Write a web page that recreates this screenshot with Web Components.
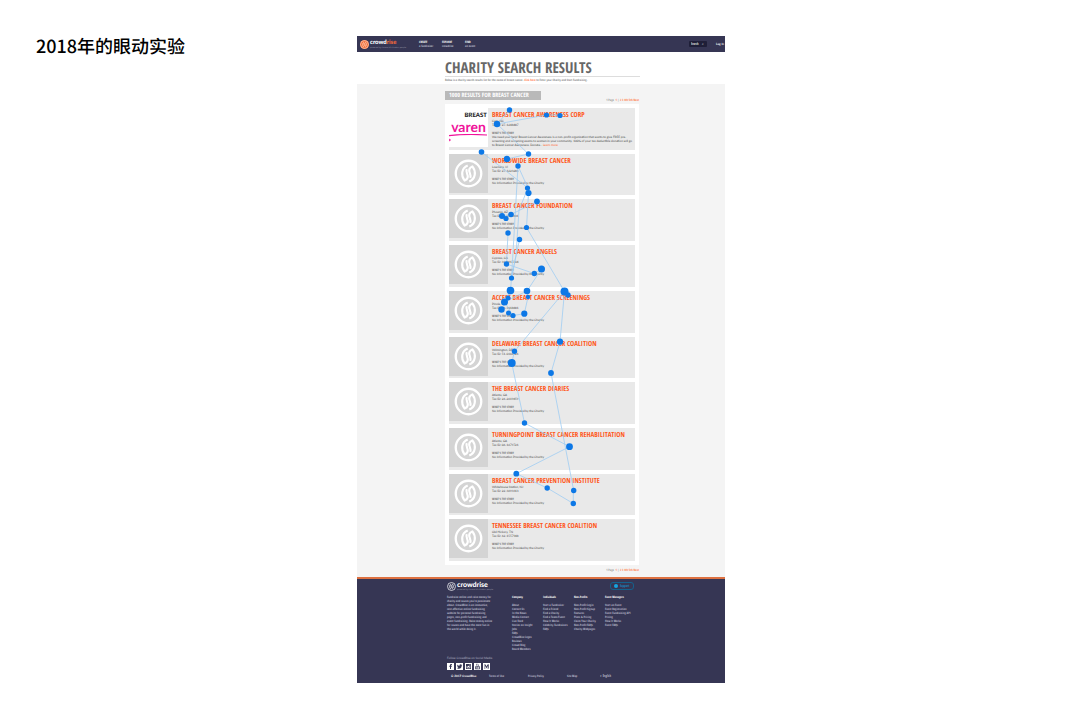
<!DOCTYPE html>
<html lang="zh-CN">
<head>
<meta charset="utf-8">
<title>2018年的眼动实验</title>
<style>
html, body { margin: 0; background: #fff; }
body { font-family: Lato, "Liberation Sans", sans-serif; text-rendering: geometricPrecision; --narrow: "Open Sans Condensed", "Open Sans", sans-serif; }
</style>
</head>
<body>
<study-slide>
  <span slot="title">2018年的眼动实验</span>
  <gaze-figure>
    <site-header></site-header>
    <page-intro></page-intro>
    <search-results></search-results>
    <site-footer></site-footer>
  </gaze-figure>
</study-slide>
<script>
const RESET = `
  :host, * { box-sizing: border-box; }
  * { margin: 0; padding: 0; }
  a { color: inherit; text-decoration: none; }
  ul { list-style: none; }
  button, input, select { font: inherit; color: inherit; border: 0; background: none; appearance: none; border-radius: 0; }
  svg { display: block; }
`;
const define = (name, html, setup) => customElements.define(name, class extends HTMLElement {
  constructor() {
    super();
    this.attachShadow({ mode: 'open' });
  }
  connectedCallback() {
    const tpl = document.createElement('template');
    tpl.innerHTML = `<style>${RESET}</style>` + (typeof html === 'function' ? html(this) : html);
    this.shadowRoot.replaceChildren(tpl.content.cloneNode(true));
    if (setup) setup(this);
  }
});

define('study-slide', `
  <style>
    :host { display: grid; grid-template-columns: 1fr minmax(0, 368px) 1fr; padding: 36px 0 36px 2px; }
    h2 { padding-left: 34px; font: 500 18px/20px "Noto Sans CJK SC", sans-serif; color: #000; white-space: nowrap; }
  </style>
  <h2><slot name="title"></slot></h2>
  <slot></slot>
`);

define('ring-mark', `
  <style>
    :host { display: block; }
    svg { width: 100%; height: 100%; fill: none; stroke: currentColor; }
  </style>
  <svg viewBox="0 0 30 30" aria-hidden="true">
    <circle cx="15" cy="15" r="13.2" stroke-width="2.4"/>
    <path stroke-width="2.2" stroke-linejoin="round" d="M14.2 6.8C7.4 9.4 7 17.4 11 22.4C14.4 20.8 14.8 18 13.6 15.4C12.8 13.4 12.6 12 13.2 10.4"/>
    <path stroke-width="2.2" stroke-linejoin="round" d="M15.8 23.2C22.6 20.6 23 12.6 19 7.6C15.6 9.2 15.2 12 16.4 14.6C17.2 16.6 17.4 18 16.8 19.6"/>
  </svg>
`);

define('brand-logo', `
  <style>
    :host { display: flex; align-items: center; gap: 1px; color: #fff; }
    .mark { width: 9px; height: 9px; flex: none; color: var(--mark, #fff); background: var(--disc, none); border-radius: 50%; }
    .name { font: 900 var(--size, 7px)/6px Lato, sans-serif; }
    em { font-style: normal; color: var(--accent, #fff); }
    small { display: block; font: 2px/3px "Open Sans", sans-serif; color: #9a9aac; white-space: nowrap; }
    a { display: block; }
  </style>
  <ring-mark class="mark"></ring-mark>
  <a href="#"><div class="name">crowd<em>rise</em></div><small><slot></slot></small></a>
`);

define('site-header', `
  <style>
    :host { display: flex; align-items: center; height: 16px; padding: 0 1px 0 3px; background: #363654; color: #fff; font: 3px/4px var(--narrow); }
    brand-logo { width: 59px; --size: 6px; --mark: #ffd9c4; --disc: #f26a35; --accent: #f4693a; }
    nav { display: grid; grid-template-columns: repeat(3, 23px); flex: 1; }
    nav a { color: #b9b9c8; }
    b { display: block; color: #fff; font-weight: 700; }
    form { display: flex; width: 18px; height: 6px; margin-right: 9px; padding: 0 2px; background: #1f1f38; border-radius: 1px; align-items: center; }
    input { width: 11px; height: 4px; }
    input::placeholder { color: #ddd; opacity: 1; }
    form button { font-size: 3px; line-height: 4px; }
    .login { font: 700 3px/4px Lato, sans-serif; white-space: nowrap; }
  </style>
  <brand-logo>powered by the world's kindest people</brand-logo>
  <nav>
    <a href="#"><b>CREATE</b>a fundraiser</a>
    <a href="#"><b>EXPLORE</b>crowdrise</a>
    <a href="#"><b>FIND</b>an event</a>
  </nav>
  <form role="search"><input type="text" placeholder="Search" aria-label="Search"><button type="button" aria-label="Go">⌕</button></form>
  <a class="login" href="#">Log In</a>
`);

define('page-intro', `
  <style>
    :host { display: block; height: 32px; padding: 8px 85px 0 88px; background: #fff; }
    h1 { font: 700 15px/16px var(--narrow); color: #676767; border-bottom: 1px solid #ddd; white-space: nowrap; height: 17px; }
    p { margin-top: 1px; font: 3px/4px var(--narrow); color: #8a8a8a; white-space: nowrap; }
    a { color: #ff7a4a; }
  </style>
  <h1>CHARITY SEARCH RESULTS</h1>
  <p>Below is a charity search results list for the name of breast cancer. <a href="#">Click here</a> to Enter your Charity and Start Fundraising.</p>
`);

define('result-pager', `
  <style>
    :host { display: block; font: 3px/4px var(--narrow); color: #999; text-align: right; }
    a { color: #ff7a4a; }
  </style>
  <nav aria-label="Pages">1 Page &nbsp;<a href="#">1</a> | <a href="#">2</a> <a href="#">3</a> <a href="#">4th</a> <a href="#">5th</a> <a href="#">Next</a></nav>
`);

define('charity-card', `
  <style>
    :host { display: flex; gap: 4px; padding: 1px; background: #e9e9e9; color: #444; font-size: 3px; line-height: 4px; min-height: 0; }
    .thumb { flex: none; width: 39px; height: 39px; background: #d4d4d4; display: grid; place-items: center; overflow: hidden; }
    ring-mark { width: 29px; height: 29px; color: #fff; }
    .body { padding-top: 4px; min-width: 0; }
    h3 { font: 700 7px/7px var(--narrow); color: #ff5719; white-space: nowrap; }
    h4 { font: 3px/4px var(--narrow); margin-top: 4px; color: #777; }
    p { white-space: nowrap; }
  </style>
  <div class="thumb"><slot name="picture"><ring-mark></ring-mark></slot></div>
  <div class="body">
    <h3><a href="#"><slot name="name"></slot></a></h3>
    <p><slot name="city"></slot></p>
    <p>Tax ID: <slot name="tax"></slot></p>
    <h4>WHAT'S THE STORY</h4>
    <p><slot>No Information Provided by the Charity</slot></p>
  </div>
`);

define('awareness-logo', `
  <style>
    :host { display: block; width: 39px; height: 39px; background: #fff; overflow: hidden; }
    .top { padding-top: 4px; font: 900 6px/7px Lato, sans-serif; color: #222; text-align: right; margin-right: 1px; }
    .big { font: 700 14px/15px Lato, sans-serif; color: #f0129a; display: flex; justify-content: center; }
    svg { width: 39px; height: 12px; fill: none; stroke: #f0129a; }
  </style>
  <div class="top">BREAST</div>
  <div class="big">varen</div>
  <svg viewBox="0 0 39 12" aria-hidden="true"><path stroke-width="1.2" d="M0 1.6Q18 -.2 38 1"/><path d="M0 5L1.5 6L0 7"/></svg>
`);

define('search-results', `
  <style>
    :host { display: block; padding: 7px 86px 5px 88px; background: #f4f4f4; }
    header { display: flex; justify-content: space-between; height: 13px; }
    h2 { height: 9px; padding: 0 4px; background: #b9b9b9; color: #fff; font: 700 6px/9px var(--narrow); white-space: nowrap; min-width: 96px; }
    header result-pager { margin-top: 7px; }
    .list { display: grid; grid-template-columns: minmax(0, 1fr); grid-auto-rows: 1fr; gap: 4px; min-height: 461px; padding: 4px; background: #fff; }
    result-pager { margin-top: 3px; }
  </style>
  <header><h2>1000 RESULTS FOR BREAST CANCER</h2><result-pager></result-pager></header>
  <div class="list"></div>
  <result-pager></result-pager>
`, el => {
  const story = `We need your help! Breast Cancer Awareness is a non-profit organization that wants to give FREE pre-<br>screening and screening exams to women in your community. 100% of your tax deductible donation will go<br>to Breast Cancer Awareness. Donate... <a href="#" style="color:#ff5719;text-decoration:none">Learn more</a>`;
  const rows = [
    ['BREAST CANCER AWARENESS CORP', 'Cary, NC', '27-1248487', story],
    ['WORLDWIDE BREAST CANCER', 'Lowndes, VI', '27-1223281'],
    ['BREAST CANCER FOUNDATION', 'Phoenix, AZ', '86-0915881'],
    ['BREAST CANCER ANGELS', 'Cypress, CA', '33-0917264'],
    ['ACCESS BREAST CANCER SCREENINGS', 'Pinole, CA', '26-3018881'],
    ['DELAWARE BREAST CANCER COALITION', 'Wilmington, DE', '51-0366521'],
    ['THE BREAST CANCER DIARIES', 'Atlanta, GA', '26-2619859'],
    ['TURNINGPOINT BREAST CANCER REHABILITATION', 'Atlanta, GA', '06-1679721'],
    ['BREAST CANCER PREVENTION INSTITUTE', 'Whitehouse Station, NJ', '22-3693313'],
    ['TENNESSEE BREAST CANCER COALITION', 'Old Hickory, TN', '62-1557948'],
  ];
  el.shadowRoot.querySelector('.list').innerHTML = rows.map(([n, c, t, s]) => `
    <charity-card>${s ? '<awareness-logo slot="picture"></awareness-logo>' : ''}<span slot="name">${n}</span><span slot="city">${c}</span><span slot="tax">${t}</span>${s || ''}</charity-card>`.trim()).join('');
});

define('footer-links', el => `
  <style>
    :host { display: block; flex: 0 0 31px; white-space: nowrap; }
    h5 { font: inherit; font-weight: 700; margin-bottom: 4px; color: #fff; }
  </style>
  <h5>${el.getAttribute('heading')}</h5>
  <ul>${el.textContent.split(';').map(t => `<li><a href="#">${t.trim()}</a></li>`).join('')}</ul>
`);

define('social-icon', el => `
  <style>
    :host { display: block; width: 7px; height: 7px; background: #fff; color: #363654; }
    a, svg { display: block; width: 7px; height: 7px; }
    svg { fill: currentColor; }
  </style>
  <a href="#" aria-label="${el.getAttribute('name')}"><svg viewBox="0 0 14 14">${({
    Facebook: '<path d="M6 12V7.5H4.5V5.5H6V4.3C6 2.8 7 2 8.3 2H9.8V4H8.8Q8 4 8 4.8V5.5H9.8L9.5 7.5H8V12Z"/>',
    Twitter: '<path d="M2 3Q4 5.4 7 5.4Q6.8 2.6 9.2 2.6Q10.2 2.6 10.8 3.3L12.2 2.9L11.4 4.4L12.4 4.2L11.4 5.4Q11.2 11.3 5.6 11.4Q3.4 11.4 2 10.4Q4 10.5 5 9.5Q3.4 9 3 7.9H4Q2.4 7.2 2.3 5.6L3.2 5.8Q1.6 4.6 2 3Z"/>',
    Instagram: '<path fill-rule="evenodd" d="M2 2H12V12H2ZM3.4 6V10.6H10.6V6H9.4A2.7 2.7 0 1 1 4.6 6ZM9 3.2V5H10.8V3.2ZM7 5.5A1.6 1.6 0 1 0 7 8.8A1.6 1.6 0 0 0 7 5.5Z"/>',
    YouTube: '<path d="M4 1.5H5L5.5 3L6 1.5H7L6 4V5.5H5V4ZM7.5 3H8.3V5H9V3H10V5.6H7.5Z"/><path fill-rule="evenodd" d="M2.5 6.3H11.5V12.5H2.5ZM4 7.3V11.5H5V7.3ZM6 8.3V11.5H7.2V8.3ZM8.3 7.3V11.5H10V8.3H9V7.3Z"/>',
    Medium: '<path d="M2 3H5L7 7L9 3H12V4L11.4 4.6V10L12 11H8.6L9.4 10V5.6L6.8 11L4.2 5.6V9.6L5.2 11H2L3.2 9.6V4.6Z"/>'
  })[el.getAttribute('name')]}</svg></a>
`);

define('site-footer', `
  <style>
    :host { display: block; padding: 3px 86px 5px 90px; border-top: 2px solid #dd7040; background: #363654; color: #b4b4c6; font: 3px/4px var(--narrow); }
    .top { display: flex; justify-content: space-between; height: 9px; margin-bottom: 4px; }
    .top button { display: flex; align-items: center; gap: 2px; height: 8px; width: 24px; margin-right: 5px; padding: 0 3px; border: 1px solid #14618c; border-radius: 3px; color: #1a86bd; }
    .dot { width: 4px; height: 4px; border-radius: 50%; background: #15a5e0; }
    .cols { display: flex; height: 61px; }
    .about { flex: 0 0 65px; min-width: 0; white-space: nowrap; }
    .social { display: flex; gap: 2px; margin: 3px 0 4px; }
    .legal { display: grid; grid-template-columns: 38px 39px 39px 33px auto; padding-left: 4px; white-space: nowrap; }
    .legal b { color: #fff; font-family: Lato, sans-serif; }
    .follow { font-family: Lato, sans-serif; }
    select { font-size: 3px; line-height: 4px; height: 4px; width: 14px; padding: 0; display: block; }
  </style>
  <div class="top"><brand-logo>powered by the world's kindest people</brand-logo><button type="button"><span class="dot"></span>Support</button></div>
  <div class="cols">
    <p class="about">Fundraise online and raise money for<br>charity and causes you're passionate<br>about. CrowdRise is an innovative,<br>cost-effective online fundraising<br>website for personal fundraising<br>pages, non-profit fundraising and<br>event fundraising. Raise money online<br>for causes and have the most fun in<br>the world while doing it.</p>
    <footer-links heading="Company">About;Contact Us;In the News;Media Contact;Live Feed;Stories on Insight;Jobs;FAQs;CrowdRise Logos;Reviews;Crowd Blog;Board Members</footer-links>
    <footer-links heading="Individuals">Start a Fundraiser;Find a Friend;Find a Charity;Find a Team/Event;How It Works;Celebrity Fundraisers;FAQs</footer-links>
    <footer-links heading="Non-Profits">Non-Profit Login;Non-Profit Signup;Features;Plans &amp; Pricing;Claim Your Charity;Non-Profit FAQs;Charity Webpages</footer-links>
    <footer-links heading="Event Managers">Start an Event;Event Registration;Event Fundraising API;Pricing;How It Works;Event FAQs</footer-links>
  </div>
  <p class="follow">Follow CrowdRise on Social Media</p>
  <div class="social"><social-icon name="Facebook"></social-icon><social-icon name="Twitter"></social-icon><social-icon name="Instagram"></social-icon><social-icon name="YouTube"></social-icon><social-icon name="Medium"></social-icon></div>
  <div class="legal"><b>© 2017 CrowdRise</b><a href="#">Terms of Use</a><a href="#">Privacy Policy</a><a href="#">Site Map</a><select aria-label="Language"><option>▾ English</option></select></div>
`);

/* Fixations and saccades recorded over the page, in slide coordinates. */
define('gaze-figure', `
  <style>
    :host { display: block; position: relative; align-self: start; }
    svg { position: absolute; top: 0; left: 0; width: 100%; height: 648px; pointer-events: none; }
    path { fill: none; stroke: #9fcdf2; stroke-width: .8; }
    circle { fill: #0d78e6; }
  </style>
  <slot></slot>
  <svg viewBox="357 36 368 648" role="img" aria-label="Eye-tracking gaze plot"><path/><g></g></svg>
`, el => {
  const points = [[509.5,110,2.7],[546.5,115,2.6],[560,115.5,2.6],[497,124,3.2],[528.5,154,2.7],[481.5,152,2.8],[507,159,3.2],[518,166,2.7],[527.5,188,2.6],[528.5,193,3.1],[537,201.5,2.9],[502,216,3],[511,214.5,2.8],[506,218.5,2.6],[526.5,227.5,2.6],[508,233,2.7],[519.5,239.5,2.7],[506.5,264,2.7],[541.5,269,3.5],[534.3,273.5,2.7],[511.5,278,2.6],[510.5,290.5,3.8],[527,291,3.3],[564.5,291.5,4],[568,295,2.7],[528,297,2.2],[508,298,2.5],[504.5,302,3.5],[501.5,309.5,3.2],[508.5,313,2.5],[513,315.5,2.6],[524.3,313.7,3.1],[560,341.7,3.1],[514.5,351.3,2.7],[511.7,363,4],[551,373,2.9],[524.5,423,2.7],[569.5,446.7,3.4],[516.3,473.7,2.9],[547.2,488,2.7],[573.7,490.5,2.7],[573.3,503.5,2.7]];
  const paths = [
    'M497 124L546.5 115H560M509.5 110L497 124L528.5 154L507 159M481.5 152L528 188L518 166L511.5 278',
    'M528 188L519 210L516 255L511.5 278M528.5 193L526.5 227.5L564.5 291.5M537 201.5L511 214.5L502 216L506 218.5',
    'M508 233L506.5 264L534 273.5L541.5 269L527 291L528 297L524.3 313.7M519.5 239.5L511.5 278L510.5 290.5L501.5 309.5',
    'M527 291L504.5 302L513 315.5L524.3 313.7M564.5 291.5L514.5 351.3L511.7 363L524.5 423L569.5 446.7L516.3 473.7L547.2 488L573.3 503.5V490.5',
    'M564.5 291.5L560 341.7L551 373L573.7 490.5'
  ];
  el.shadowRoot.querySelector('path').setAttribute('d', paths.join(''));
  el.shadowRoot.querySelector('g').innerHTML = points.map(([x, y, r]) => `<circle cx="${x}" cy="${y}" r="${r}"/>`).join('');
});
</script>
</body>
</html>
